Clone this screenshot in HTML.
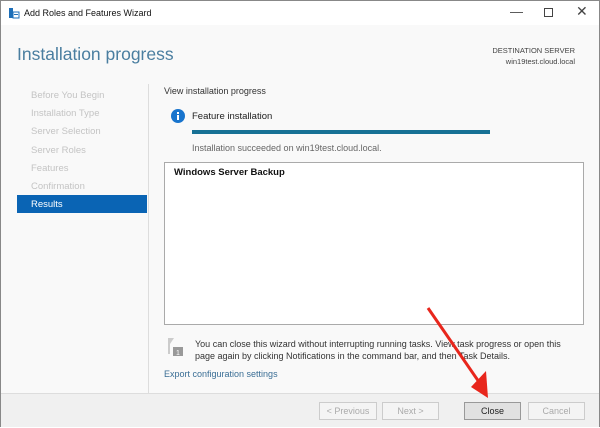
<!DOCTYPE html>
<html><head><meta charset="utf-8"><style>
*{box-sizing:border-box;margin:0;padding:0}
body{width:600px;height:427px;overflow:hidden;background:#fff;font-family:"Liberation Sans",sans-serif;position:relative;font-size:9px;color:#333}
.frame{position:absolute;left:0;top:0;width:600px;height:427px;border:1px solid #888;background:#f9f9f9}
.tb{position:absolute;left:0;top:0;width:598px;height:24px;background:#fff}
.a{position:absolute;white-space:nowrap}
.nav{color:#c4c4c4;font-size:9.5px;left:30px}
.btn{position:absolute;top:401px;height:18px;border:1px solid #ccc;background:#f4f4f4;color:#aaa;font-size:9px;text-align:center;line-height:16px}
</style></head><body>
<div class="frame">
<div class="tb"></div>
<svg class="a" style="left:7px;top:6px" width="12" height="12" viewBox="0 0 12 12"><rect x="1" y="1" width="4" height="10" fill="#1e6fb8"/><rect x="5" y="5" width="6" height="6" fill="none" stroke="#1e6fb8"/><rect x="6" y="7" width="4" height="1" fill="#1e6fb8"/></svg>
<div class="a" style="left:23px;top:7px;font-size:9px;color:#111">Add Roles and Features Wizard</div>
<div class="a" style="left:509px;top:3px;font-size:13px;color:#444">—</div>
<div class="a" style="left:543px;top:7px;width:9px;height:9px;border:1px solid #444"></div>
<div class="a" style="left:575px;top:2px;font-size:14px;color:#444">✕</div>
<div class="a" style="left:16px;top:43px;font-size:17.5px;color:#4a7ea0">Installation progress</div>
<div class="a" style="right:24px;top:44px;font-size:7.5px;color:#444;text-align:right;line-height:11px">DESTINATION SERVER<br>win19test.cloud.local</div>
<div class="a" style="left:147px;top:83px;width:1px;height:310px;background:#ddd"></div>
<div class="a nav" style="top:89px">Before You Begin</div>
<div class="a nav" style="top:107px">Installation Type</div>
<div class="a nav" style="top:125px">Server Selection</div>
<div class="a nav" style="top:144px">Server Roles</div>
<div class="a nav" style="top:162px">Features</div>
<div class="a nav" style="top:180px">Confirmation</div>
<div class="a" style="left:16px;top:194px;width:130px;height:18px;background:#0a64b4;color:#fff;font-size:9.5px;padding:4px 0 0 14px">Results</div>
<div class="a" style="left:163px;top:85px;font-size:9px">View installation progress</div>
<svg class="a" style="left:170px;top:108px" width="14" height="14" viewBox="0 0 14 14"><circle cx="7" cy="7" r="7" fill="#1874cd"/><rect x="6" y="6" width="2" height="5" fill="#fff"/><rect x="6" y="3" width="2" height="2" fill="#fff"/></svg>
<div class="a" style="left:191px;top:110px;font-size:9.5px;color:#222">Feature installation</div>
<div class="a" style="left:191px;top:129px;width:298px;height:4px;background:#177195"></div>
<div class="a" style="left:191px;top:142px;font-size:9px;color:#666">Installation succeeded on win19test.cloud.local.</div>
<div class="a" style="left:163px;top:161px;width:420px;height:163px;border:1px solid #aaa;background:#fff"></div>
<div class="a" style="left:173px;top:166px;font-size:9.5px;color:#111;font-weight:bold">Windows Server Backup</div>
<svg class="a" style="left:165px;top:335px" width="20" height="20" viewBox="0 0 20 20"><path d="M2 2 L8 2 L4 8 L4 18 L2 18 Z" fill="#ccc"/><rect x="7" y="11" width="10" height="9" fill="#999"/><text x="10" y="19" font-size="7" fill="#fff" font-family="Liberation Sans">1</text></svg>
<div class="a" style="left:194px;top:337px;font-size:9px;color:#333;line-height:12px">You can close this wizard without interrupting running tasks. View task progress or open this<br>page again by clicking Notifications in the command bar, and then Task Details.</div>
<div class="a" style="left:163px;top:368px;font-size:9px;color:#3a6e95">Export configuration settings</div>
<div class="a" style="left:0;top:392px;width:598px;height:34px;background:#f0f0f0;border-top:1px solid #ddd"></div>
<div class="btn" style="left:318px;width:58px">&lt; Previous</div>
<div class="btn" style="left:381px;width:57px">Next &gt;</div>
<div class="btn" style="left:463px;width:57px;border-color:#999;background:#e1e1e1;color:#222">Close</div>
<div class="btn" style="left:527px;width:57px">Cancel</div>
<svg class="a" style="left:0;top:0" width="600" height="427"><line x1="427" y1="307" x2="478" y2="381" stroke="#e8261c" stroke-width="3"/><polygon points="470,386 487,397 485,370" fill="#e8261c"/></svg>
</div>
</body></html>
